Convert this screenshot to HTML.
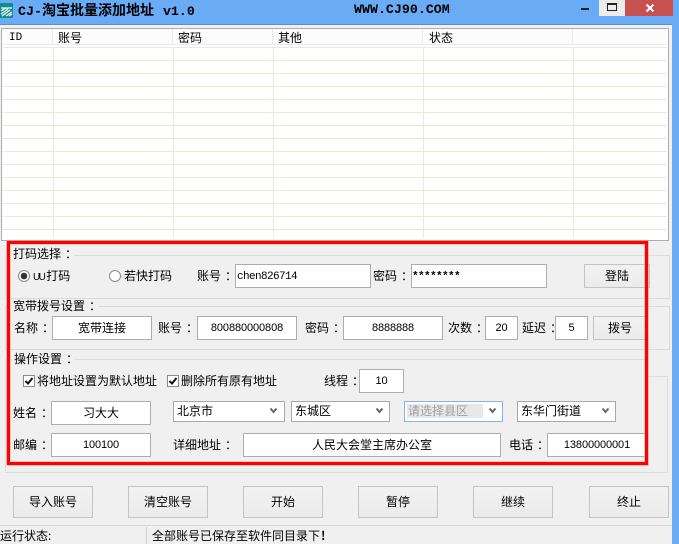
<!DOCTYPE html>
<html><head><meta charset="utf-8">
<style>
html,body{margin:0;padding:0}
body{width:679px;height:544px;position:relative;overflow:hidden;background:#f0f0f0;font:12px/14px "WenQuanYi Zen Hei","Noto Sans CJK SC",sans-serif;color:#000}
div{position:absolute;box-sizing:border-box}
i{font-style:normal;position:relative;left:4px}
.t{white-space:nowrap;height:14px;line-height:14px}
.i{background:#fff;border:1px solid #abadb3;text-align:center;white-space:nowrap;font-size:12px}
.n{font-family:'Liberation Sans',sans-serif;font-size:11px;letter-spacing:-.1px}
.b{background:linear-gradient(#f2f2f2,#ebebeb);border:1px solid #c4c4c4;text-align:center}
.g{border:1px solid #dcdcdc}
.s{background:#fff;border:1px solid #a9a9a9;height:21px;line-height:18px;padding-left:3px;font-size:12px;white-space:nowrap}
.m{font-family:"Liberation Mono",monospace;font-weight:bold;font-size:13.3px}
.h{top:29px;height:16px;width:1px;background:#e5ecf7}
.c{top:47px;height:191px;width:1px;background:#ece9d8}
.bg{background:#f0f0f0;padding:0 3px;height:14px;line-height:14px;white-space:nowrap}
</style></head><body>
<div style="left:0;top:0;width:679px;height:24px;background:#69abf5"></div>
<div style="left:672px;top:24px;width:7px;height:520px;background:#69abf5"></div>
<div style="left:0;top:24px;width:672px;height:1px;background:#5b8fc9"></div>
<svg style="position:absolute;left:0;top:3px" width="14" height="16" viewBox="0 0 14 16"><rect width="13" height="15" rx="1" fill="#0b8f8c"/><path d="M1 5H12M1 8L6 5M1 11L8 6M2 13L10 7M6 13L12 9M9 13L12 11" stroke="#fff" stroke-width="1.2" fill="none"/></svg>
<div class="t" style="left:18px;top:3px;font-weight:bold;font-size:14px"><span class="m">CJ-</span>淘宝批量添加地址<span style="display:inline-block;width:9px"></span><span class="m">v1.0</span></div>
<div class="t m" style="left:354px;top:3px;height:14px">WWW.CJ90.COM</div>
<div style="left:581px;top:8px;width:8px;height:2px;background:#222"></div>
<div style="left:599px;top:0;width:26px;height:16px;background:#ececec"></div>
<div style="left:607px;top:3px;width:10px;height:8px;border:1px solid #222;border-top-width:2px"></div>
<div style="left:625px;top:0;width:48px;height:16px;background:#c75050"></div>
<svg style="position:absolute;left:645px;top:3px" width="10" height="10" viewBox="0 0 10 10"><path d="M1.5 1.5L8.5 8.5M8.5 1.5L1.5 8.5" stroke="#fff" stroke-width="2" fill="none"/></svg>

<div style="left:1px;top:28px;width:668px;height:213px;background:#fff;border:1px solid #abadb3;border-right-color:#b0b0b0"></div>
<div style="left:2px;top:29px;width:665px;height:16px;background:#fcfcfc;border-bottom:1px solid #e5ecf7"></div>
<div style="left:3px;top:47px;width:664px;height:183px;background:repeating-linear-gradient(#ece9d8 0,#ece9d8 1px,#fff 1px,#fff 13px)"></div>
<div class="h" style="left:52px"></div><div class="h" style="left:172px"></div><div class="h" style="left:272px"></div><div class="h" style="left:422px"></div><div class="h" style="left:572px"></div>
<div class="c" style="left:53px"></div><div class="c" style="left:173px"></div><div class="c" style="left:273px"></div><div class="c" style="left:423px"></div><div class="c" style="left:573px"></div>
<div class="t" style="left:9px;top:31px;font-family:'Liberation Mono',monospace;font-size:11px">ID</div>
<div class="t" style="left:58px;top:31px">账号</div><div class="t" style="left:178px;top:31px">密码</div><div class="t" style="left:278px;top:31px">其他</div><div class="t" style="left:429px;top:31px">状态</div>

<div class="g" style="left:5px;top:255px;width:665px;height:44px"></div>
<div class="g" style="left:5px;top:306px;width:665px;height:44px"></div>
<div class="g" style="left:5px;top:359px;width:663px;height:114px"></div>
<div style="left:648px;top:359px;width:24px;height:17px;background:#f0f0f0"></div>
<div style="left:648px;top:376px;width:20px;height:1px;background:#dcdcdc"></div>
<div class="bg" style="left:10px;top:247px;width:64px">打码选择<i>：</i></div>
<div class="bg" style="left:10px;top:299px;width:88px">宽带拨号设置<i>：</i></div>
<div class="bg" style="left:11px;top:352px;width:64px">操作设置<i>：</i></div>

<svg style="position:absolute;left:18px;top:269px" width="110" height="14" viewBox="0 0 110 14"><circle cx="6" cy="7" r="5.5" fill="#fff" stroke="#8a8a8a"/><circle cx="6" cy="7" r="3.3" fill="#333"/><circle cx="97" cy="7" r="5.5" fill="#fff" stroke="#8a8a8a"/></svg>
<div class="t" style="left:33px;top:269px"><span style="font-family:'Liberation Sans',sans-serif;font-size:10px;letter-spacing:-1.6px;margin-right:2px">UU</span>打码</div>
<div class="t" style="left:124px;top:269px">若快打码</div>
<div class="t" style="left:197px;top:269px">账号<i>：</i></div>
<div class="i" style="left:235px;top:264px;width:136px;height:24px;text-align:left;padding-left:1px;line-height:25px;font-family:'Liberation Mono',monospace;font-size:11px;letter-spacing:-.6px">chen826714</div>
<div class="t" style="left:373px;top:269px">密码<i>：</i></div>
<div class="i" style="left:411px;top:264px;width:136px;height:24px;text-align:left;padding-left:0;line-height:24px;font-family:'Liberation Mono',monospace;font-size:11px;font-weight:bold;letter-spacing:-.6px">********</div>
<div class="b" style="left:584px;top:264px;width:66px;height:24px;line-height:22px">登陆</div>

<div class="t" style="left:14px;top:321px">名称<i>：</i></div>
<div class="i" style="left:52px;top:316px;width:100px;height:24px;line-height:22px">宽带连接</div>
<div class="t" style="left:158px;top:321px">账号<i>：</i></div>
<div class="i n" style="left:197px;top:316px;width:100px;height:24px;line-height:22px">800880000808</div>
<div class="t" style="left:305px;top:321px">密码<i>：</i></div>
<div class="i n" style="left:343px;top:316px;width:100px;height:24px;line-height:22px">8888888</div>
<div class="t" style="left:448px;top:321px">次数<i>：</i></div>
<div class="i n" style="left:485px;top:316px;width:33px;height:24px;line-height:22px">20</div>
<div class="t" style="left:522px;top:321px">延迟<i>：</i></div>
<div class="i n" style="left:555px;top:316px;width:33px;height:24px;line-height:22px">5</div>
<div class="b" style="left:593px;top:316px;width:54px;height:24px;line-height:22px">拨号</div>

<svg style="position:absolute;left:23px;top:375px" width="160" height="13" viewBox="0 0 160 13"><rect x=".5" y=".5" width="11" height="11" fill="#fff" stroke="#8a8a8a"/><path d="M2.5 6L5 8.5L9.5 3" stroke="#111" stroke-width="2" fill="none"/><rect x="144.5" y=".5" width="11" height="11" fill="#fff" stroke="#8a8a8a"/><path d="M146.5 6L149 8.5L153.5 3" stroke="#111" stroke-width="2" fill="none"/></svg>
<div class="t" style="left:37px;top:374px">将地址设置为默认地址</div>
<div class="t" style="left:181px;top:374px">删除所有原有地址</div>
<div class="t" style="left:324px;top:374px">线程<i>：</i></div>
<div class="i n" style="left:359px;top:369px;width:45px;height:24px;line-height:22px">10</div>

<div class="t" style="left:13px;top:406px">姓名<i>：</i></div>
<div class="i" style="left:51px;top:401px;width:100px;height:24px;line-height:22px">习大大</div>
<div class="s" style="left:173px;top:401px;width:112px">北京市</div>
<div class="s" style="left:291px;top:401px;width:99px">东城区</div>
<div class="s" style="left:404px;top:401px;width:99px;border-color:#7eb4ea"></div>
<div style="left:407px;top:404px;width:76px;height:14px;background:#e8e8e8;color:#a0a0a0;line-height:14px;white-space:nowrap;padding-left:1px">请选择县区</div>
<div class="s" style="left:517px;top:401px;width:99px">东华门街道</div>
<svg style="position:absolute;left:270px;top:407px" width="340" height="8" viewBox="0 0 340 8" fill="none" stroke="#666" stroke-width="2"><path d="M.5 1.5L3.5 5L6.5 1.5M106.5 1.5L109.5 5L112.5 1.5M219.5 1.5L222.5 5L225.5 1.5M332.5 1.5L335.5 5L338.5 1.5"/></svg>

<div class="t" style="left:13px;top:438px">邮编<i>：</i></div>
<div class="i n" style="left:51px;top:433px;width:100px;height:24px;line-height:22px">100100</div>
<div class="t" style="left:173px;top:438px">详细地址<i>：</i></div>
<div class="i" style="left:243px;top:433px;width:258px;height:24px;line-height:22px">人民大会堂主席办公室</div>
<div class="t" style="left:509px;top:438px">电话<i>：</i></div>
<div class="i n" style="left:547px;top:433px;width:100px;height:24px;line-height:22px">13800000001</div>

<div style="left:7px;top:241px;width:641px;height:224px;border:3px solid #f00;box-shadow:0 0 0 1px rgba(255,120,120,.45),inset 0 0 0 1px rgba(255,120,120,.35)"></div>

<div class="b" style="left:13px;top:486px;width:80px;height:32px;line-height:30px">导入账号</div>
<div class="b" style="left:128px;top:486px;width:80px;height:32px;line-height:30px">清空账号</div>
<div class="b" style="left:243px;top:486px;width:80px;height:32px;line-height:30px">开始</div>
<div class="b" style="left:358px;top:486px;width:80px;height:32px;line-height:30px">暂停</div>
<div class="b" style="left:473px;top:486px;width:80px;height:32px;line-height:30px">继续</div>
<div class="b" style="left:589px;top:486px;width:80px;height:32px;line-height:30px">终止</div>

<div style="left:0;top:525px;width:672px;height:1px;background:#d6d6d6"></div>
<div style="left:146px;top:527px;width:1px;height:17px;background:#d0d0d0"></div>
<div class="t" style="left:0;top:529px">运行状态:</div>
<div class="t" style="left:152px;top:529px">全部账号已保存至软件同目录下<b style="margin-left:1px">!</b></div>
</body></html>
